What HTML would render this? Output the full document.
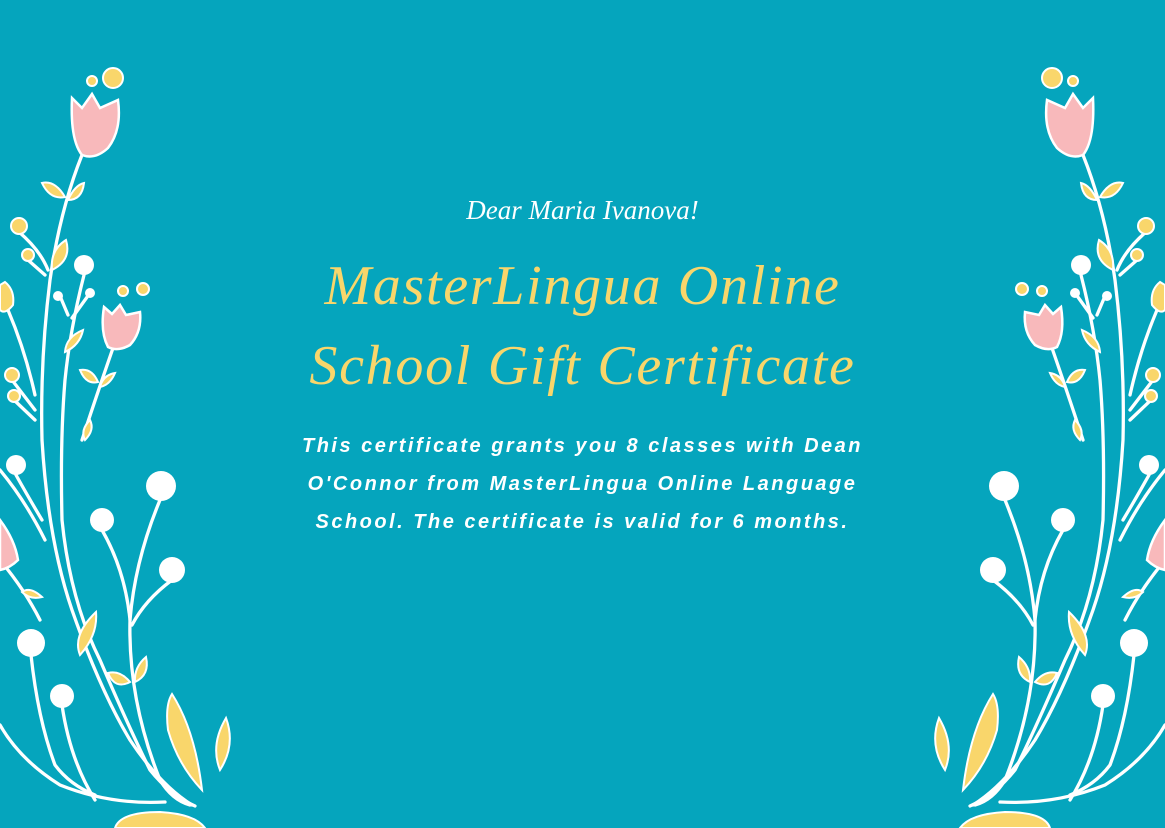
<!DOCTYPE html>
<html><head><meta charset="utf-8"><style>
html,body{margin:0;padding:0}
body{width:1165px;height:828px;background:#05A5BD;position:relative;overflow:hidden}
svg.f{position:absolute;top:0;width:260px;height:828px}
.t{position:absolute;left:0;width:1165px;text-align:center;white-space:nowrap}
.dear{top:195px;font:italic 27px "Liberation Serif",serif;color:#fff}
.ti{font:italic 56px "Liberation Serif",serif;color:#F9D66B;letter-spacing:1.7px}
.b{font:italic bold 20px "Liberation Sans",sans-serif;color:#fff;letter-spacing:2.5px}
</style></head><body>
<svg class="f" style="left:0" viewBox="0 0 260 828" id="L">
<g fill="none" stroke="#fff" stroke-width="3.3" stroke-linecap="round">
<path d="M82 155 Q60 210 50 280 Q40 360 42 440 Q48 540 72 610 Q100 690 130 740 Q160 785 192 805"/>
<path d="M84 275 Q70 330 65 380 Q60 440 62 520 Q70 600 100 660 Q130 730 150 770 Q170 795 195 806"/>
<path d="M113 348 Q95 400 82 440"/>
<path d="M60 296 L68 315 M90 293 L72 318"/>
<path d="M19 232 Q40 250 48 270 M28 260 L45 275"/>
<path d="M8 310 Q25 350 35 395"/>
<path d="M12 380 L35 410 M14 400 L35 420"/>
<path d="M160 500 Q135 560 130 620 Q128 700 160 780 Q172 800 190 805"/>
<path d="M172 580 Q145 600 132 625"/>
<path d="M102 530 Q125 570 130 620"/>
<path d="M0 470 Q25 500 45 540"/>
<path d="M16 475 Q30 500 42 520"/>
<path d="M31 655 Q38 720 55 765 Q70 785 95 795"/>
<path d="M62 705 Q70 760 95 800"/>
<path d="M0 725 Q20 760 60 785 Q110 805 165 802"/>
<path d="M0 560 Q25 590 40 620"/>
</g>
<g fill="#fff">
<circle cx="84" cy="265" r="10"/><circle cx="58" cy="296" r="5"/><circle cx="90" cy="293" r="5"/>
<circle cx="16" cy="465" r="10"/><circle cx="161" cy="486" r="15"/><circle cx="102" cy="520" r="12"/>
<circle cx="172" cy="570" r="13"/><circle cx="31" cy="643" r="14"/><circle cx="62" cy="696" r="12"/>
</g>
<g fill="#F9D66B" stroke="#fff" stroke-width="2">
<circle cx="92" cy="81" r="5"/><circle cx="113" cy="78" r="10"/>
<circle cx="19" cy="226" r="8"/><circle cx="28" cy="255" r="6"/>
<circle cx="123" cy="291" r="5"/><circle cx="143" cy="289" r="6"/>
<circle cx="12" cy="375" r="7"/><circle cx="14" cy="396" r="6"/>
<path d="M42 183 Q55 180 65 197 Q50 200 42 183Z"/>
<path d="M84 183 Q75 185 68 200 Q82 200 84 183Z"/>
<path d="M66 240 Q72 260 52 270 Q50 250 66 240Z"/>
<path d="M5 282 Q15 290 13 305 Q5 315 0 310 L0 285Z"/>
<path d="M83 330 Q80 345 65 352 Q66 337 83 330Z"/>
<path d="M80 370 Q92 368 98 382 Q86 385 80 370Z"/>
<path d="M115 373 Q110 385 100 387 Q103 375 115 373Z"/>
<path d="M90 420 Q95 430 85 440 Q80 430 90 420Z"/>
<path d="M22 592 Q30 586 42 597 Q30 600 22 592Z"/>
<path d="M96 612 Q98 635 80 655 Q72 635 96 612Z"/>
<path d="M108 673 Q120 670 130 682 Q115 690 108 673Z"/>
<path d="M146 657 Q150 675 135 682 Q134 667 146 657Z"/>
<path d="M172 694 Q195 730 202 790 Q178 765 168 730 Q165 705 172 694Z"/>
<path d="M226 718 Q236 745 220 770 Q210 745 226 718Z"/>
<path d="M115 828 Q120 812 160 812 Q195 814 205 828Z"/>
</g>
<g fill="#F8B9BB" stroke="#fff" stroke-width="2.5">
<path d="M72 98 L82 108 L92 94 L100 108 L118 100 Q122 130 108 148 Q95 160 82 155 Q70 140 72 98Z"/>
<path d="M104 307 L112 314 L120 305 L126 315 L140 312 Q142 332 130 345 Q118 352 108 347 Q100 332 104 307Z"/>
<path d="M0 520 Q15 540 18 560 Q10 568 0 570Z"/>
</g>
</svg>
<svg class="f" style="left:905px;transform:scaleX(-1)" viewBox="0 0 260 828"><use href="#L"/></svg>
<div class="t dear">Dear Maria Ivanova!</div>
<div class="t ti" style="top:254px">MasterLingua Online</div>
<div class="t ti" style="top:334px">School Gift Certificate</div>
<div class="t b" style="top:435px">This certificate grants you 8 classes with Dean</div>
<div class="t b" style="top:473px">O'Connor from MasterLingua Online Language</div>
<div class="t b" style="top:511px">School. The certificate is valid for 6 months.</div>
</body></html>
